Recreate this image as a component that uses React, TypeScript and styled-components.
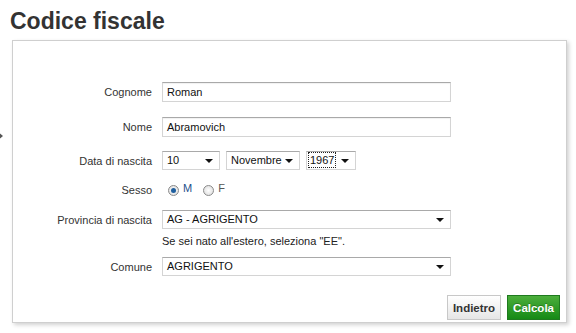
import React from "react";
import styled, { createGlobalStyle } from "styled-components";

const GlobalStyle = createGlobalStyle`
  body {
    margin: 0;
    background: #fff;
    font-family: "Liberation Sans", Arial, sans-serif;
    color: #333;
  }
`;

const Page = styled.div`
  position: relative;
  width: 576px;
  height: 333px;
  overflow: hidden;
`;

const Title = styled.h1`
  margin: 0;
  padding: 7px 10px 0;
  font-size: 23px;
  line-height: 28px;
  font-weight: bold;
  color: #333;
`;

const SideArrow = styled.div`
  position: absolute;
  left: -2px;
  top: 132px;
  width: 0;
  height: 0;
  border-top: 4px solid transparent;
  border-bottom: 4px solid transparent;
  border-left: 5px solid #555;
`;

const Card = styled.div`
  margin: 5px 0 0 12px;
  width: 555px;
  height: 283px;
  box-sizing: border-box;
  border: 1px solid #cfcfcf;
  box-shadow: 2px 2px 4px rgba(0, 0, 0, 0.18);
  padding-top: 41px;
  display: flex;
  flex-direction: column;
`;

const Row = styled.div<{ $gap: number; $h: number }>`
  display: grid;
  grid-template-columns: 139px 289px;
  column-gap: 10px;
  align-items: center;
  margin-top: ${(p) => p.$gap}px;
  height: ${(p) => p.$h}px;
`;

const Label = styled.label`
  text-align: right;
  font-size: 11px;
  color: #333;
`;

const TextBox = styled.div`
  height: 20px;
  box-sizing: border-box;
  border: 1px solid #d4d4d4;
  border-top-color: #a9a9a9;
  box-shadow: inset 0 1px 1px rgba(0, 0, 0, 0.06);
  padding: 0 4px;
  font-size: 11px;
  line-height: 18px;
  color: #111;
  background: #fff;
`;

const Select = styled.div<{ $w?: number }>`
  position: relative;
  width: ${(p) => (p.$w ? `${p.$w}px` : "100%")};
  height: 19px;
  box-sizing: border-box;
  border: 1px solid #d4d4d4;
  border-top-color: #a9a9a9;
  padding: 0 4px;
  font-size: 11px;
  line-height: 17px;
  color: #111;
  background: #fff;
`;

const Caret = styled.span`
  position: absolute;
  right: 6px;
  top: 7px;
  width: 0;
  height: 0;
  border-left: 4px solid transparent;
  border-right: 4px solid transparent;
  border-top: 4px solid #111;
`;

const Focused = styled.span`
  display: inline-block;
  outline: 1px dotted #222;
  line-height: 14px;
  margin-left: -2px;
  padding: 0 1px;
`;

const DateGroup = styled.div`
  display: flex;
  gap: 6px;
`;

const RadioGroup = styled.div`
  display: flex;
  align-items: center;
  padding-left: 6px;
  font-size: 11px;
`;

const Radio = styled.span<{ $on?: boolean }>`
  width: 11px;
  height: 11px;
  box-sizing: border-box;
  border-radius: 50%;
  border: 1px solid #8a8a8a;
  background: radial-gradient(circle, #fff 0%, #d8d8d8 100%);
  display: inline-flex;
  align-items: center;
  justify-content: center;
  &::after {
    content: "";
    width: 5px;
    height: 5px;
    border-radius: 50%;
    background: ${(p) => (p.$on ? "#1f5f9f" : "transparent")};
  }
`;

const RadioText = styled.span<{ $on?: boolean }>`
  margin: -4px 11px 0 4px;
  color: ${(p) => (p.$on ? "#1c4f8a" : "#555")};
`;

const Hint = styled.div`
  grid-column: 2;
  font-size: 11px;
  color: #222;
`;

const Actions = styled.div`
  margin-top: auto;
  display: flex;
  justify-content: flex-end;
  gap: 6px;
  padding: 0 6px 2px 0;
`;

const Button = styled.button<{ $primary?: boolean }>`
  height: 25px;
  padding: 0 5px;
  font-family: "Liberation Sans", Arial, sans-serif;
  font-size: 11.5px;
  font-weight: bold;
  border: 1px solid ${(p) => (p.$primary ? "#1f7a1f" : "#c8c8c8")};
  color: ${(p) => (p.$primary ? "#fff" : "#333")};
  background: ${(p) =>
    p.$primary
      ? "linear-gradient(#4cae3c, #168a16)"
      : "linear-gradient(#ffffff, #e6e6e6)"};
  text-shadow: ${(p) => (p.$primary ? "0 -1px 0 rgba(0,0,0,0.25)" : "none")};
  cursor: pointer;
`;

export default function App() {
  return (
    <Page>
      <GlobalStyle />
      <SideArrow />
      <Title>Codice fiscale</Title>
      <Card>
        <Row $gap={0} $h={20}>
          <Label>Cognome</Label>
          <TextBox>Roman</TextBox>
        </Row>
        <Row $gap={15} $h={20}>
          <Label>Nome</Label>
          <TextBox>Abramovich</TextBox>
        </Row>
        <Row $gap={14} $h={19}>
          <Label>Data di nascita</Label>
          <DateGroup>
            <Select $w={58}>
              10
              <Caret />
            </Select>
            <Select $w={74}>
              Novembre
              <Caret />
            </Select>
            <Select $w={50}>
              <Focused>1967</Focused>
              <Caret />
            </Select>
          </DateGroup>
        </Row>
        <Row $gap={13} $h={14}>
          <Label>Sesso</Label>
          <RadioGroup>
            <Radio $on />
            <RadioText $on>M</RadioText>
            <Radio />
            <RadioText>F</RadioText>
          </RadioGroup>
        </Row>
        <Row $gap={13} $h={19}>
          <Label>Provincia di nascita</Label>
          <Select>
            AG - AGRIGENTO
            <Caret />
          </Select>
        </Row>
        <Row $gap={4} $h={15}>
          <Hint>Se sei nato all'estero, seleziona "EE".</Hint>
        </Row>
        <Row $gap={9} $h={19}>
          <Label>Comune</Label>
          <Select>
            AGRIGENTO
            <Caret />
          </Select>
        </Row>
        <Actions>
          <Button>Indietro</Button>
          <Button $primary>Calcola</Button>
        </Actions>
      </Card>
    </Page>
  );
}
